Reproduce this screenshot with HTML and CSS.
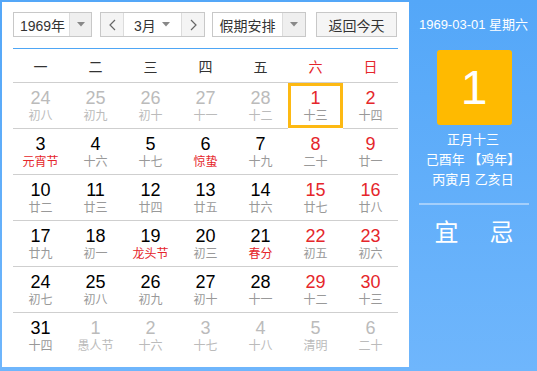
FILE: index.html
```html
<!DOCTYPE html>
<html lang="zh">
<head>
<meta charset="utf-8">
<title>万年历</title>
<link rel="stylesheet" href="styles.css">
</head>
<body>
<div class="app">
  <div class="main">
    <div class="toolbar">
      <div class="select sel-year">
        <span class="sel-text">1969年</span>
        <span class="sel-arrow"><svg width="8" height="5" viewBox="0 0 8 5"><path d="M0 0h8L4 4.5z" fill="#888"/></svg></span>
      </div>
      <div class="month-group">
        <span class="nav-btn"><svg width="7" height="12" viewBox="0 0 7 12"><path d="M6 1L1 6l5 5" fill="none" stroke="#666" stroke-width="1.2"/></svg></span>
        <span class="month-sel"><span class="sel-text">3月</span><svg width="8" height="5" viewBox="0 0 8 5"><path d="M0 0h8L4 4.5z" fill="#888"/></svg></span>
        <span class="nav-btn"><svg width="7" height="12" viewBox="0 0 7 12"><path d="M1 1l5 5-5 5" fill="none" stroke="#666" stroke-width="1.2"/></svg></span>
      </div>
      <div class="select sel-holiday">
        <span class="sel-text">假期安排</span>
        <span class="sel-arrow"><svg width="8" height="5" viewBox="0 0 8 5"><path d="M0 0h8L4 4.5z" fill="#888"/></svg></span>
      </div>
      <div class="today-btn">返回今天</div>
    </div>
    <div class="weekdays">
      <span>一</span><span>二</span><span>三</span><span>四</span><span>五</span><span class="red">六</span><span class="red">日</span>
    </div>
    <div class="grid">
      <div class="cell other"><b>24</b><i>初八</i></div>
      <div class="cell other"><b>25</b><i>初九</i></div>
      <div class="cell other"><b>26</b><i>初十</i></div>
      <div class="cell other"><b>27</b><i>十一</i></div>
      <div class="cell other"><b>28</b><i>十二</i></div>
      <div class="cell wk selected"><b>1</b><i>十三</i></div>
      <div class="cell wk"><b>2</b><i>十四</i></div>

      <div class="cell"><b>3</b><i class="fest">元宵节</i></div>
      <div class="cell"><b>4</b><i>十六</i></div>
      <div class="cell"><b>5</b><i>十七</i></div>
      <div class="cell"><b>6</b><i class="fest">惊蛰</i></div>
      <div class="cell"><b>7</b><i>十九</i></div>
      <div class="cell wk"><b>8</b><i>二十</i></div>
      <div class="cell wk"><b>9</b><i>廿一</i></div>

      <div class="cell"><b>10</b><i>廿二</i></div>
      <div class="cell"><b>11</b><i>廿三</i></div>
      <div class="cell"><b>12</b><i>廿四</i></div>
      <div class="cell"><b>13</b><i>廿五</i></div>
      <div class="cell"><b>14</b><i>廿六</i></div>
      <div class="cell wk"><b>15</b><i>廿七</i></div>
      <div class="cell wk"><b>16</b><i>廿八</i></div>

      <div class="cell"><b>17</b><i>廿九</i></div>
      <div class="cell"><b>18</b><i>初一</i></div>
      <div class="cell"><b>19</b><i class="fest">龙头节</i></div>
      <div class="cell"><b>20</b><i>初三</i></div>
      <div class="cell"><b>21</b><i class="fest">春分</i></div>
      <div class="cell wk"><b>22</b><i>初五</i></div>
      <div class="cell wk"><b>23</b><i>初六</i></div>

      <div class="cell"><b>24</b><i>初七</i></div>
      <div class="cell"><b>25</b><i>初八</i></div>
      <div class="cell"><b>26</b><i>初九</i></div>
      <div class="cell"><b>27</b><i>初十</i></div>
      <div class="cell"><b>28</b><i>十一</i></div>
      <div class="cell wk"><b>29</b><i>十二</i></div>
      <div class="cell wk"><b>30</b><i>十三</i></div>

      <div class="cell last"><b>31</b><i>十四</i></div>
      <div class="cell other last"><b>1</b><i>愚人节</i></div>
      <div class="cell other last"><b>2</b><i>十六</i></div>
      <div class="cell other last"><b>3</b><i>十七</i></div>
      <div class="cell other last"><b>4</b><i>十八</i></div>
      <div class="cell other last"><b>5</b><i>清明</i></div>
      <div class="cell other last"><b>6</b><i>二十</i></div>
    </div>
  </div>
  <div class="side">
    <div class="side-date">1969-03-01 星期六</div>
    <div class="day-box">1</div>
    <div class="lunar">
      <div>正月十三</div>
      <div>己酉年 【鸡年】</div>
      <div>丙寅月 乙亥日</div>
    </div>
    <div class="side-line"></div>
    <div class="yiji"><span>宜</span><span>忌</span></div>
  </div>
</div>
</body>
</html>
```
FILE: styles.css
```css
* { box-sizing: border-box; }
html, body { margin: 0; padding: 0; }
body {
  width: 537px;
  height: 371px;
  overflow: hidden;
  font-family: "Liberation Sans", "Noto Sans CJK SC", sans-serif;
}
.app {
  display: flex;
  width: 537px;
  height: 371px;
  background: linear-gradient(180deg, #54a7f8 0%, #6fb6fc 100%);
}
.main {
  width: 407px;
  margin: 2px 0 4px 2px;
  background: #fff;
  padding: 10px 0 0 11px;
}
.toolbar {
  display: flex;
  height: 25px;
  color: #333;
  font-size: 14px;
}
.select, .month-group, .today-btn {
  display: flex;
  align-items: stretch;
  border: 1px solid #c8c8c8;
  height: 25px;
}
.sel-text { display: flex; align-items: center; }
.sel-year { width: 79px; }
.sel-year .sel-text { width: 55px; justify-content: center; padding-left: 2px; }
.sel-arrow {
  flex: 1;
  display: flex;
  align-items: center;
  justify-content: center;
  background: #efefef;
  border-left: 1px solid #dcdcdc;
}
.month-group { width: 105px; margin-left: 8px; }
.nav-btn {
  width: 22px;
  display: flex;
  align-items: center;
  justify-content: center;
  background: #f4f4f4;
}
.month-sel {
  flex: 1;
  display: flex;
  align-items: center;
  justify-content: space-between;
  padding: 0 11px 0 10px;
  border-left: 1px solid #dcdcdc;
  border-right: 1px solid #dcdcdc;
}
.sel-holiday { width: 94px; margin-left: 7px; }
.sel-holiday .sel-text { width: 69px; justify-content: center; }
.today-btn {
  width: 81px;
  margin-left: 10px;
  justify-content: center;
  align-items: center;
  background: #f5f5f5;
}
.weekdays {
  display: grid;
  grid-template-columns: repeat(7, 55px);
  width: 385px;
  margin-top: 11px;
  border-top: 1px solid #4ea6f5;
  border-bottom: 1px solid #cfcfcf;
  height: 35px;
  font-size: 14px;
  color: #333;
}
.weekdays span {
  display: flex;
  align-items: center;
  justify-content: center;
  padding-top: 1px;
}
.red { color: #e5262b; }
.grid {
  display: grid;
  grid-template-columns: repeat(7, 55px);
  width: 385px;
}
.cell {
  height: 46px;
  border-bottom: 1px solid #cfcfcf;
  display: flex;
  flex-direction: column;
  align-items: center;
  padding-top: 5px;
}
.cell.last { border-bottom: none; }
.cell b {
  font-weight: normal;
  font-size: 18px;
  line-height: 20px;
  height: 20px;
  color: #000;
}
.cell i {
  font-style: normal;
  font-size: 12px;
  line-height: 16px;
  height: 16px;
  color: #999;
}
.cell.wk b { color: #e5262b; }
.cell i.fest { color: #e5262b; }
.cell.other b, .cell.other i { color: #bbb; }
.cell.selected {
  border: 3px solid #fdb913;
  padding-top: 2px;
  height: 45px;
}
.side {
  flex: 1;
  display: flex;
  flex-direction: column;
  align-items: center;
  color: #fff;
}
.side-date {
  margin-top: 17px;
  font-size: 13px;
  line-height: 16px;
  height: 16px;
  margin-left: 1px;
}
.day-box {
  margin-top: 17px;
  width: 75px;
  height: 75px;
  background: #ffba00;
  border-radius: 3px;
  font-size: 48px;
  display: flex;
  align-items: center;
  justify-content: center;
  margin-left: 2px;
}
.lunar {
  margin-top: 5px;
  font-size: 13px;
  line-height: 20px;
  text-align: center;
}
.side-line {
  margin-top: 13px;
  width: 110px;
  height: 2px;
  background: #a4cffb;
  margin-left: 2px;
}
.yiji {
  margin-top: 15px;
  display: flex;
  gap: 31px;
  font-size: 24px;
  line-height: 26px;
  margin-left: 2px;
}
```
